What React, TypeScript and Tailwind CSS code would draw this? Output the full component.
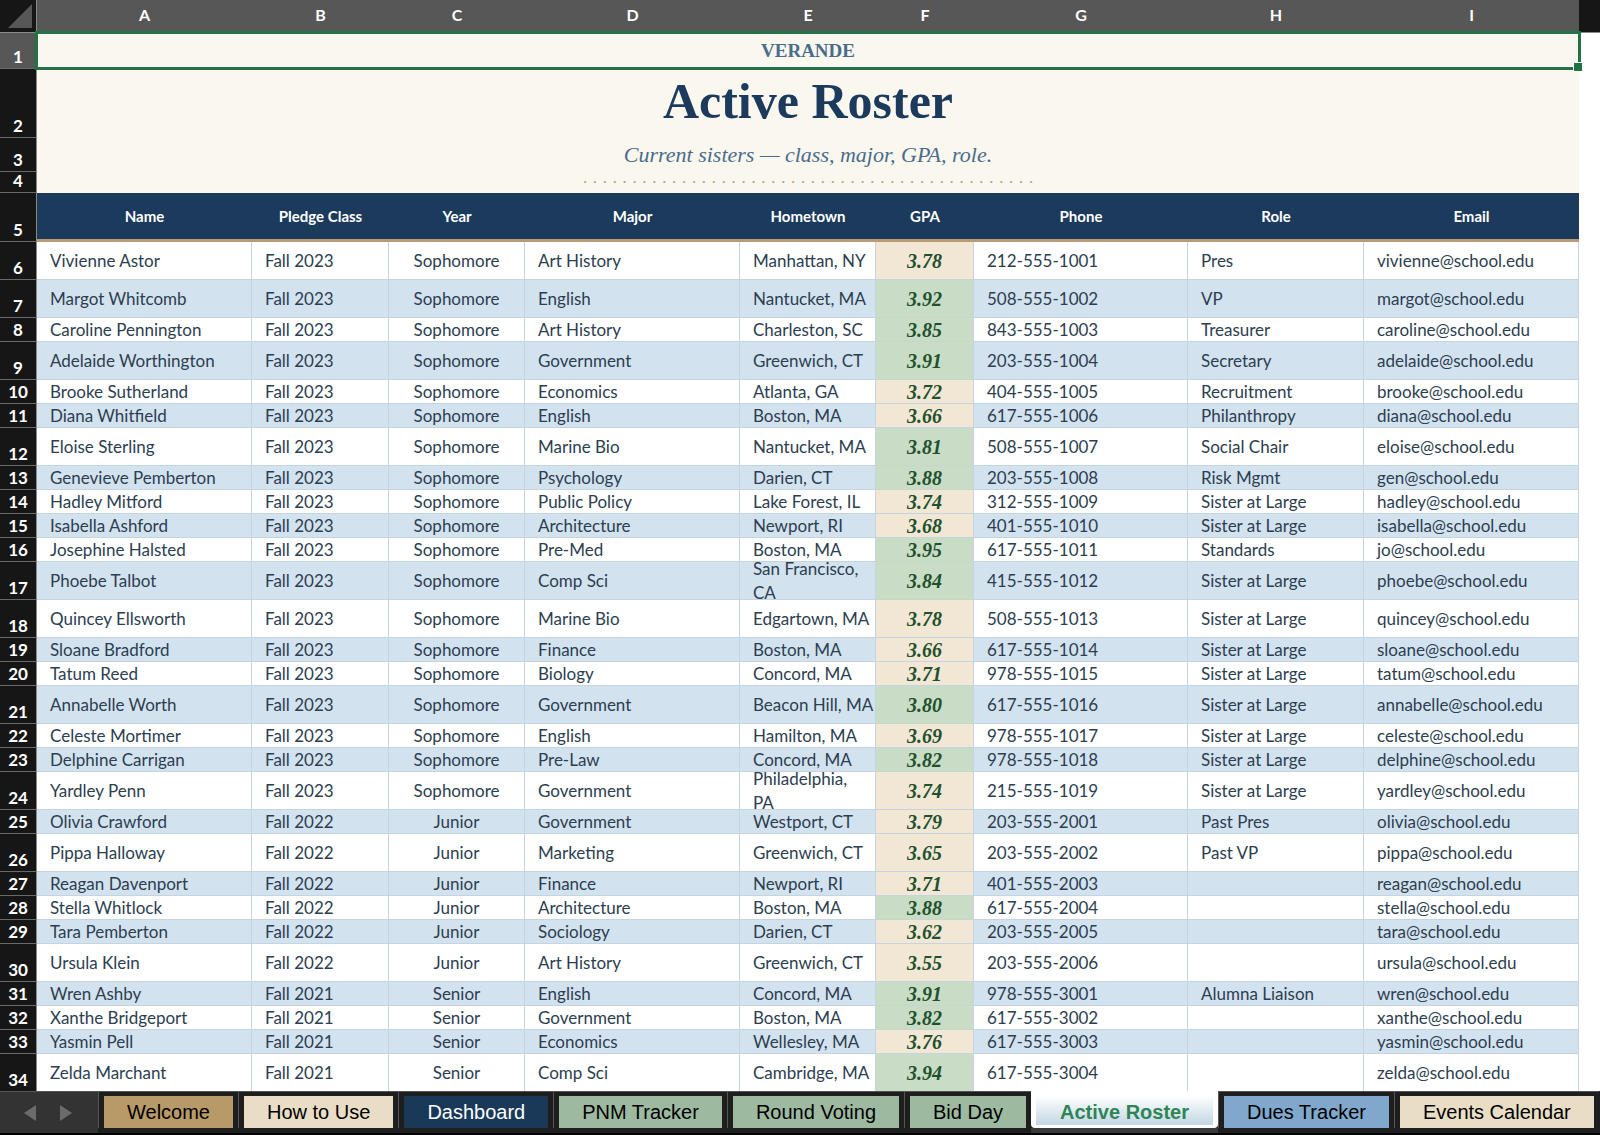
import clsx from 'clsx'

interface Sister {
  name: string
  pledgeClass: string
  year: string
  major: string
  hometown: string
  gpa: string
  phone: string
  role: string
  email: string
  tall?: boolean
}

const F23 = { pledgeClass: 'Fall 2023', year: 'Sophomore' }
const F22 = { pledgeClass: 'Fall 2022', year: 'Junior' }
const F21 = { pledgeClass: 'Fall 2021', year: 'Senior' }

const sisters: Sister[] = [
  { ...F23, name: 'Vivienne Astor', major: 'Art History', hometown: 'Manhattan, NY', gpa: '3.78', phone: '212-555-1001', role: 'Pres', email: 'vivienne@school.edu', tall: true },
  { ...F23, name: 'Margot Whitcomb', major: 'English', hometown: 'Nantucket, MA', gpa: '3.92', phone: '508-555-1002', role: 'VP', email: 'margot@school.edu', tall: true },
  { ...F23, name: 'Caroline Pennington', major: 'Art History', hometown: 'Charleston, SC', gpa: '3.85', phone: '843-555-1003', role: 'Treasurer', email: 'caroline@school.edu' },
  { ...F23, name: 'Adelaide Worthington', major: 'Government', hometown: 'Greenwich, CT', gpa: '3.91', phone: '203-555-1004', role: 'Secretary', email: 'adelaide@school.edu', tall: true },
  { ...F23, name: 'Brooke Sutherland', major: 'Economics', hometown: 'Atlanta, GA', gpa: '3.72', phone: '404-555-1005', role: 'Recruitment', email: 'brooke@school.edu' },
  { ...F23, name: 'Diana Whitfield', major: 'English', hometown: 'Boston, MA', gpa: '3.66', phone: '617-555-1006', role: 'Philanthropy', email: 'diana@school.edu' },
  { ...F23, name: 'Eloise Sterling', major: 'Marine Bio', hometown: 'Nantucket, MA', gpa: '3.81', phone: '508-555-1007', role: 'Social Chair', email: 'eloise@school.edu', tall: true },
  { ...F23, name: 'Genevieve Pemberton', major: 'Psychology', hometown: 'Darien, CT', gpa: '3.88', phone: '203-555-1008', role: 'Risk Mgmt', email: 'gen@school.edu' },
  { ...F23, name: 'Hadley Mitford', major: 'Public Policy', hometown: 'Lake Forest, IL', gpa: '3.74', phone: '312-555-1009', role: 'Sister at Large', email: 'hadley@school.edu' },
  { ...F23, name: 'Isabella Ashford', major: 'Architecture', hometown: 'Newport, RI', gpa: '3.68', phone: '401-555-1010', role: 'Sister at Large', email: 'isabella@school.edu' },
  { ...F23, name: 'Josephine Halsted', major: 'Pre-Med', hometown: 'Boston, MA', gpa: '3.95', phone: '617-555-1011', role: 'Standards', email: 'jo@school.edu' },
  { ...F23, name: 'Phoebe Talbot', major: 'Comp Sci', hometown: 'San Francisco,\nCA', gpa: '3.84', phone: '415-555-1012', role: 'Sister at Large', email: 'phoebe@school.edu', tall: true },
  { ...F23, name: 'Quincey Ellsworth', major: 'Marine Bio', hometown: 'Edgartown, MA', gpa: '3.78', phone: '508-555-1013', role: 'Sister at Large', email: 'quincey@school.edu', tall: true },
  { ...F23, name: 'Sloane Bradford', major: 'Finance', hometown: 'Boston, MA', gpa: '3.66', phone: '617-555-1014', role: 'Sister at Large', email: 'sloane@school.edu' },
  { ...F23, name: 'Tatum Reed', major: 'Biology', hometown: 'Concord, MA', gpa: '3.71', phone: '978-555-1015', role: 'Sister at Large', email: 'tatum@school.edu' },
  { ...F23, name: 'Annabelle Worth', major: 'Government', hometown: 'Beacon Hill, MA', gpa: '3.80', phone: '617-555-1016', role: 'Sister at Large', email: 'annabelle@school.edu', tall: true },
  { ...F23, name: 'Celeste Mortimer', major: 'English', hometown: 'Hamilton, MA', gpa: '3.69', phone: '978-555-1017', role: 'Sister at Large', email: 'celeste@school.edu' },
  { ...F23, name: 'Delphine Carrigan', major: 'Pre-Law', hometown: 'Concord, MA', gpa: '3.82', phone: '978-555-1018', role: 'Sister at Large', email: 'delphine@school.edu' },
  { ...F23, name: 'Yardley Penn', major: 'Government', hometown: 'Philadelphia,\nPA', gpa: '3.74', phone: '215-555-1019', role: 'Sister at Large', email: 'yardley@school.edu', tall: true },
  { ...F22, name: 'Olivia Crawford', major: 'Government', hometown: 'Westport, CT', gpa: '3.79', phone: '203-555-2001', role: 'Past Pres', email: 'olivia@school.edu' },
  { ...F22, name: 'Pippa Halloway', major: 'Marketing', hometown: 'Greenwich, CT', gpa: '3.65', phone: '203-555-2002', role: 'Past VP', email: 'pippa@school.edu', tall: true },
  { ...F22, name: 'Reagan Davenport', major: 'Finance', hometown: 'Newport, RI', gpa: '3.71', phone: '401-555-2003', role: '', email: 'reagan@school.edu' },
  { ...F22, name: 'Stella Whitlock', major: 'Architecture', hometown: 'Boston, MA', gpa: '3.88', phone: '617-555-2004', role: '', email: 'stella@school.edu' },
  { ...F22, name: 'Tara Pemberton', major: 'Sociology', hometown: 'Darien, CT', gpa: '3.62', phone: '203-555-2005', role: '', email: 'tara@school.edu' },
  { ...F22, name: 'Ursula Klein', major: 'Art History', hometown: 'Greenwich, CT', gpa: '3.55', phone: '203-555-2006', role: '', email: 'ursula@school.edu', tall: true },
  { ...F21, name: 'Wren Ashby', major: 'English', hometown: 'Concord, MA', gpa: '3.91', phone: '978-555-3001', role: 'Alumna Liaison', email: 'wren@school.edu' },
  { ...F21, name: 'Xanthe Bridgeport', major: 'Government', hometown: 'Boston, MA', gpa: '3.82', phone: '617-555-3002', role: '', email: 'xanthe@school.edu' },
  { ...F21, name: 'Yasmin Pell', major: 'Economics', hometown: 'Wellesley, MA', gpa: '3.76', phone: '617-555-3003', role: '', email: 'yasmin@school.edu' },
  { ...F21, name: 'Zelda Marchant', major: 'Comp Sci', hometown: 'Cambridge, MA', gpa: '3.94', phone: '617-555-3004', role: '', email: 'zelda@school.edu', tall: true },
]

const columns = [
  { letter: 'A', label: 'Name', width: 'w-[215px]' },
  { letter: 'B', label: 'Pledge Class', width: 'w-[137px]' },
  { letter: 'C', label: 'Year', width: 'w-[136px]' },
  { letter: 'D', label: 'Major', width: 'w-[215px]' },
  { letter: 'E', label: 'Hometown', width: 'w-[136px]' },
  { letter: 'F', label: 'GPA', width: 'w-[98px]' },
  { letter: 'G', label: 'Phone', width: 'w-[214px]' },
  { letter: 'H', label: 'Role', width: 'w-[176px]' },
  { letter: 'I', label: 'Email', width: 'w-[215px]' },
]

const tabs = [
  { label: 'Welcome', color: 'bg-[#b89a68] text-black' },
  { label: 'How to Use', color: 'bg-[#e9dec5] text-black' },
  { label: 'Dashboard', color: 'bg-[#1a3858] text-white' },
  { label: 'PNM Tracker', color: 'bg-[#9db9a0] text-black' },
  { label: 'Round Voting', color: 'bg-[#9db9a0] text-black' },
  { label: 'Bid Day', color: 'bg-[#9db9a0] text-black' },
  { label: 'Active Roster', color: '', active: true },
  { label: 'Dues Tracker', color: 'bg-[#7fa8cc] text-black' },
  { label: 'Events Calendar', color: 'bg-[#e9dec5] text-black' },
]

const SERIF = "font-['Liberation_Serif',serif]"

function RowNumber({ n, selected }: { n: number; selected?: boolean }) {
  return (
    <th
      scope="row"
      className={clsx(
        'border-r border-b border-r-[#8a8a8a] border-b-[#6a6a6a] p-0 pb-[2px] text-center align-bottom text-[17px] leading-[18px] font-bold text-white',
        selected ? 'bg-[#575757]' : 'bg-[#161616]',
      )}
    >
      {n}
    </th>
  )
}

function Cell({ text, tall, center }: { text: string; tall?: boolean; center?: boolean }) {
  return (
    <td className="border-r border-b border-[#c5d4e1] p-0">
      <div
        className={clsx(
          'flex items-center overflow-hidden whitespace-pre',
          tall ? 'h-[37px]' : 'h-[23px]',
          center ? 'justify-center' : 'pl-[13px]',
        )}
      >
        {text}
      </div>
    </td>
  )
}

function SisterRow({ sister, index }: { sister: Sister; index: number }) {
  const { tall } = sister
  const high = Number(sister.gpa) >= 3.8

  return (
    <tr className={clsx(tall ? 'h-[38px]' : 'h-6', index % 2 === 1 ? 'bg-[#d3e2ef]' : 'bg-white')}>
      <RowNumber n={index + 6} />
      <Cell text={sister.name} tall={tall} />
      <Cell text={sister.pledgeClass} tall={tall} />
      <Cell text={sister.year} tall={tall} center />
      <Cell text={sister.major} tall={tall} />
      <Cell text={sister.hometown} tall={tall} />
      <td
        className={clsx(
          'border-r border-b border-r-[#c5d4e1] p-0 text-center text-[20px] leading-[22px] font-bold text-[#22502d] italic',
          SERIF,
          high ? 'border-b-[#c5d8cc] bg-[#c8dcc6]' : 'border-b-[#c5d4e1] bg-[#f2e7d5]',
        )}
      >
        {sister.gpa}
      </td>
      <Cell text={sister.phone} tall={tall} />
      <Cell text={sister.role} tall={tall} />
      <Cell text={sister.email} tall={tall} />
      <td className="bg-white p-0" />
    </tr>
  )
}

function Sheet() {
  return (
    <table className="w-full table-fixed border-separate border-spacing-0 text-[17px] leading-6 text-[#2c3e50]">
      <colgroup>
        <col className="w-[37px]" />
        {columns.map((c) => (
          <col key={c.letter} className={c.width} />
        ))}
        <col />
      </colgroup>
      <thead>
        <tr className="h-[33px] bg-[#575757] text-white">
          <td className="border-r border-b border-[#8a8a8a] bg-[#161616] p-0">
            <svg className="ml-2 h-6 w-6" viewBox="0 0 24 24" aria-hidden="true">
              <path d="M24 0v24H0z" fill="#575757" />
            </svg>
          </td>
          {columns.map((c) => (
            <th key={c.letter} scope="col" className="p-0 pb-1 text-[16px] font-bold">
              {c.letter}
            </th>
          ))}
          <td className="border-b border-[#8a8a8a] bg-[#161616] p-0" />
        </tr>
      </thead>
      <tbody>
        <tr className="h-9">
          <RowNumber n={1} selected />
          {/* selected merged cell, with its outline and fill handle */}
          <td colSpan={9} className="relative bg-[#faf7ef] p-0 text-center">
            <span className={clsx('text-[19px] font-bold text-[#4a6c8c]', SERIF)}>VERANDE</span>
            <div className="absolute -inset-x-[2px] -top-[2px] -bottom-px border-[3px] border-[#217346] shadow-[inset_0_0_0_1px_white]" />
            <div className="absolute -right-1 -bottom-[3px] h-[10px] w-[10px] border border-white bg-[#217346]" />
          </td>
          <td className="bg-white p-0" />
        </tr>
        <tr className="h-[69px]">
          <RowNumber n={2} />
          <td colSpan={9} className="bg-[#faf7ef] p-0 text-center align-top">
            <h1 className={clsx('text-[50px] leading-[64px] font-bold text-[#1b3a5c]', SERIF)}>Active Roster</h1>
          </td>
          <td className="bg-white p-0" />
        </tr>
        <tr className="h-[34px]">
          <RowNumber n={3} />
          <td
            colSpan={9}
            className={clsx('bg-[#faf7ef] p-0 text-center text-[22px] text-[#4a6c8c] italic', SERIF)}
          >
            Current sisters — class, major, GPA, role.
          </td>
          <td className="bg-white p-0" />
        </tr>
        <tr className="h-[21px]">
          <RowNumber n={4} />
          <td colSpan={9} className="bg-[#faf7ef] p-0 text-center">
            <p className={clsx('text-[17px] leading-5 text-[#b0a184]', SERIF)}>
              {'· '.repeat(46).trim()}
            </p>
          </td>
          <td className="bg-white p-0" />
        </tr>
        <tr className="h-[49px] text-white">
          <RowNumber n={5} />
          {columns.map((c) => (
            <th
              key={c.letter}
              scope="col"
              className="border-b-[3px] border-[#b89a74] bg-[#1b3a5c] p-0 text-[15px] font-bold"
            >
              {c.label}
            </th>
          ))}
          <td className="bg-white p-0" />
        </tr>
        {sisters.map((s, i) => (
          <SisterRow key={s.name} sister={s} index={i} />
        ))}
      </tbody>
    </table>
  )
}

function SheetTabs() {
  return (
    <footer className="flex h-11 shrink-0 border-b-2 border-black bg-[#1e1e1e] font-['Liberation_Sans',sans-serif] text-[20px]">
      <div className="flex w-[98px] shrink-0 items-center gap-6 border-t border-[#555] bg-[#333] pl-6">
        <button type="button" aria-label="Previous sheet">
          <svg className="h-4 w-3" viewBox="0 0 12 16" aria-hidden="true">
            <path d="M12 0v16L0 8z" fill="#6b6b6b" />
          </svg>
        </button>
        <button type="button" aria-label="Next sheet">
          <svg className="h-4 w-3" viewBox="0 0 12 16" aria-hidden="true">
            <path d="M0 0v16l12-8z" fill="#6b6b6b" />
          </svg>
        </button>
      </div>
      <nav className="flex min-w-0 flex-1 overflow-hidden">
        {tabs.map((t) =>
          t.active ? (
            <div key={t.label} className="shrink-0 border-b-[5px] border-[#3a3a3a]">
              <button
                type="button"
                className="h-full rounded-b-sm bg-white px-[5px] pt-[5px] pb-[3px] font-bold text-[#2e8555]"
              >
                <span className="flex h-full items-center bg-linear-to-b from-white to-[#c3d6e4] px-6 pt-[2px]">
                  {t.label}
                </span>
              </button>
            </div>
          ) : (
            <div key={t.label} className="shrink-0 border-t border-[#555] pb-[5px]">
              <button type="button" className="h-full border-l border-[#555] px-[5px] pt-1">
                <span className={clsx('flex h-full items-center px-[23px]', t.color)}>{t.label}</span>
              </button>
            </div>
          ),
        )}
      </nav>
    </footer>
  )
}

export default function App() {
  return (
    <div className="flex h-screen flex-col bg-white font-['Lato',sans-serif]">
      <main className="min-h-0 flex-1 overflow-hidden">
        <Sheet />
      </main>
      <SheetTabs />
    </div>
  )
}
